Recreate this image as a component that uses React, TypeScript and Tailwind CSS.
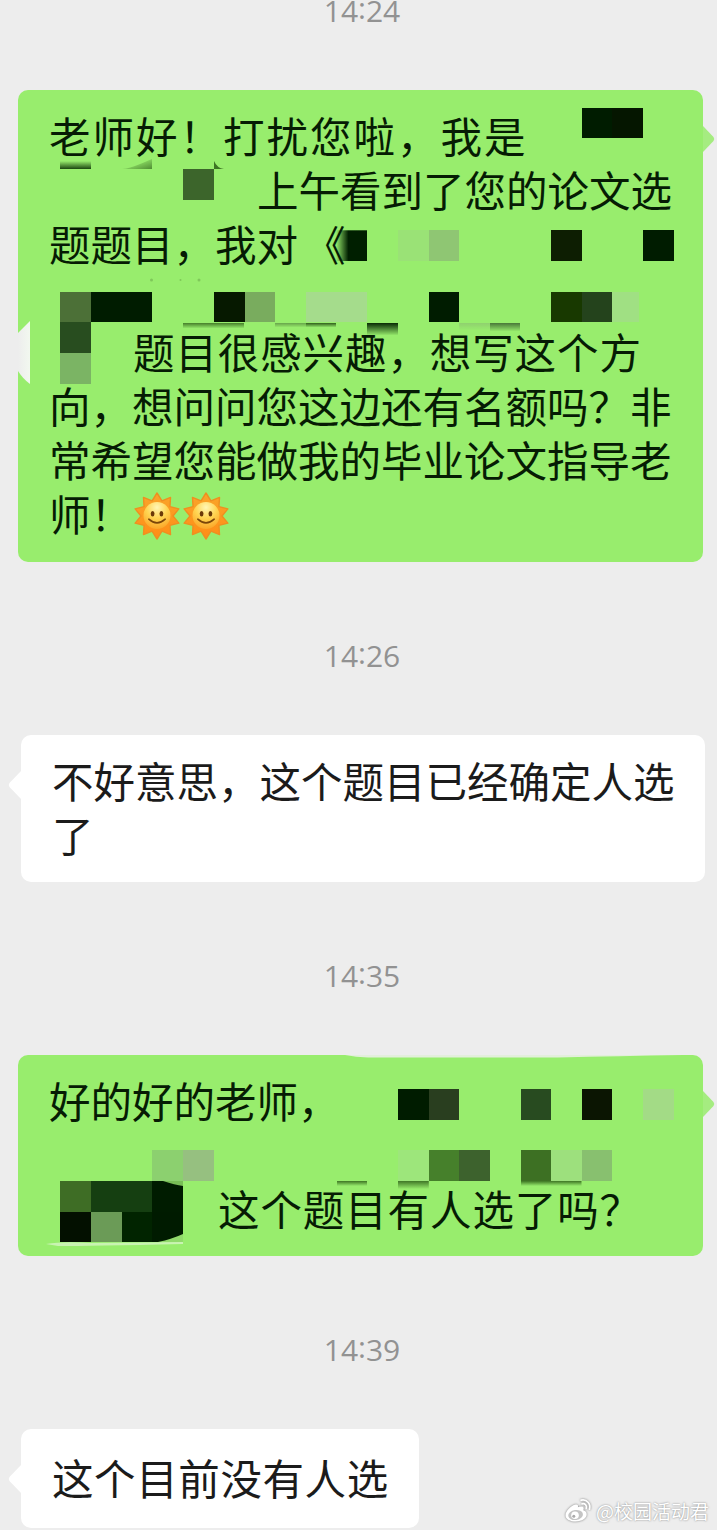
import React from 'react';

interface Tile {
  x: number;
  y: number;
  color: string;
  w?: number;
  h?: number;
  fade?: boolean;
}

interface LineProps {
  children?: React.ReactNode;
  className?: string;
}

interface BubbleProps {
  side: 'left' | 'right';
  className: string;
  children: React.ReactNode;
}

const CELL = 30.7;

// Tile positions are relative to the top left corner of the bubble
const FIRST_TILES: Tile[] = [
  { x: 563.7, y: 17.7, color: '#001c00' },
  { x: 594.4, y: 17.7, color: '#051600' },
  { x: 165, y: 79, color: '#3c652b' },
  { x: 379.8, y: 140.3, color: '#9ae276' },
  { x: 410.5, y: 140.3, color: '#8fc673' },
  { x: 533, y: 140.3, color: '#0d1e02' },
  { x: 625, y: 140.3, color: '#001c00' },
  { x: 42, y: 201.5, color: '#4c7037' },
  { x: 73, y: 201.5, w: 61.4, color: '#001c00' },
  { x: 196, y: 201.5, color: '#061900' },
  { x: 226.6, y: 201.5, color: '#79ac5e' },
  { x: 288, y: 201.5, w: 61, color: '#a5dc8c' },
  { x: 410.5, y: 201.5, color: '#001c00' },
  { x: 533, y: 201.5, color: '#183900' },
  { x: 563.7, y: 201.5, color: '#24431c' },
  { x: 594.4, y: 201.5, w: 27, color: '#a0e083' },
  { x: 42, y: 232.3, color: '#284d1f' },
  { x: 42, y: 262.8, color: '#7bb464' },
];

const FIRST_SMUDGES: Tile[] = [
  { x: 165, y: 232.5, w: 61, h: 6, color: '#3d7424', fade: true },
  { x: 257, y: 232.5, w: 31, h: 5, color: '#629b47', fade: true },
  { x: 288, y: 232.5, w: 30, h: 5, color: '#244d13', fade: true },
  { x: 349, y: 232.5, w: 31, h: 13, color: '#032200', fade: true },
  { x: 441, y: 232.5, w: 31, h: 8, color: '#8fce6f', fade: true },
  { x: 472, y: 232.5, w: 30, h: 9, color: '#447036', fade: true },
];

const REPLY_TILES: Tile[] = [
  { x: 379.8, y: 34, color: '#001c00' },
  { x: 410.5, y: 34, color: '#293e1f' },
  { x: 502.5, y: 34, color: '#284b20' },
  { x: 563.7, y: 34, color: '#0b1502' },
  { x: 625, y: 34, color: '#a3db86' },
  { x: 134.4, y: 95.3, color: '#8cd06f' },
  { x: 165, y: 95.3, color: '#96c080' },
  { x: 379.8, y: 95.3, color: '#9de67b' },
  { x: 410.5, y: 95.3, color: '#46802b' },
  { x: 441, y: 95.3, color: '#3d622d' },
  { x: 502.5, y: 95.3, color: '#3d7023' },
  { x: 533, y: 95.3, color: '#9de07d' },
  { x: 563.7, y: 95.3, color: '#88c06f' },
  { x: 42, y: 126, color: '#3e6d25' },
  { x: 73, y: 126, w: 61.4, color: '#153f11' },
  { x: 134.4, y: 126, color: '#001c00' },
  { x: 42, y: 156.7, color: '#031000' },
  { x: 73, y: 156.7, color: '#6b9b57' },
  { x: 103.7, y: 156.7, color: '#012400' },
  { x: 134.4, y: 156.7, color: '#001b00' },
];

const REPLY_SMUDGES: Tile[] = [
  { x: 319, y: 126, w: 30, h: 5, color: '#3d7424', fade: true },
  { x: 379.8, y: 126, w: 31, h: 8, color: '#3f7626', fade: true },
  { x: 502.5, y: 126, w: 61, h: 5, color: '#3d7424', fade: true },
];

const Mosaic: React.FC<{ tiles: Tile[]; children?: React.ReactNode }> = ({ tiles, children }) => (
  <svg className="pointer-events-none absolute inset-0 h-full w-full overflow-visible">
    <defs>
      <linearGradient id="down" x1="0" y1="0" x2="0" y2="1">
        <stop offset="0" stopColor="#fff" />
        <stop offset="1" stopColor="#000" />
      </linearGradient>
      <mask id="fade" maskContentUnits="objectBoundingBox">
        <rect width="1" height="1" fill="url(#down)" />
      </mask>
    </defs>
    {tiles.map((tile, i) => (
      <rect
        key={i}
        x={tile.x}
        y={tile.y}
        width={tile.w ?? CELL}
        height={tile.h ?? CELL}
        fill={tile.color}
        mask={tile.fade ? 'url(#fade)' : undefined}
        shapeRendering="crispEdges"
      />
    ))}
    {children}
  </svg>
);

const Sun: React.FC = () => {
  const points = Array.from({ length: 20 }, (_, i) => {
    const angle = (i * Math.PI) / 10 - Math.PI / 2;
    const radius = i % 2 === 0 ? 23 : 16;
    return `${24 + radius * Math.cos(angle)},${24 + radius * Math.sin(angle)}`;
  }).join(' ');

  return (
    <svg viewBox="0 0 48 48" className="h-12 w-12 shrink-0">
      <defs>
        <radialGradient id="sunFace" cx="0.5" cy="0.2" r="0.8">
          <stop offset="0" stopColor="#fff6b4" />
          <stop offset="0.5" stopColor="#ffd451" />
          <stop offset="1" stopColor="#fba528" />
        </radialGradient>
        <linearGradient id="sunRays" x1="0" y1="0" x2="0" y2="1">
          <stop offset="0" stopColor="#f9a52b" />
          <stop offset="1" stopColor="#ff8d16" />
        </linearGradient>
      </defs>
      <polygon points={points} fill="url(#sunRays)" stroke="#ee8f20" strokeWidth="1.4" strokeLinejoin="round" />
      <circle cx="24" cy="23.5" r="13.5" fill="url(#sunFace)" />
      <ellipse cx="19.6" cy="21.8" rx="1.9" ry="2.7" fill="#6b3a08" />
      <ellipse cx="28.4" cy="21.8" rx="1.9" ry="2.7" fill="#6b3a08" />
      <path d="M15.8 27.2Q24 34.5 32.2 27.2" fill="none" stroke="#7b4509" strokeWidth="1.6" strokeLinecap="round" />
    </svg>
  );
};

const WeiboLogo: React.FC = () => (
  <svg viewBox="0 0 28 26" className="h-[26px] w-7 drop-shadow-[0_0_1px_#777]">
    <path
      d="M11.5 6.5C7 7.5 1.5 13 1.5 17.2c0 4 4.8 6.3 10.2 6.3 6.5 0 11-3.4 11-7.2 0-2.3-1.8-3.4-3.4-4 .8-2.2.4-4.2-2.7-3.8-1 .1-2.2.6-2.7.7.6-2.1-.3-3.1-2.4-2.7z"
      fill="#fff"
    />
    <ellipse cx="11.6" cy="17" rx="7.4" ry="5" fill="#c4c4c4" transform="rotate(-8 11.6 17)" />
    <circle cx="11" cy="17.3" r="3.8" fill="#fff" />
    <circle cx="9.8" cy="18.3" r="1.5" fill="#aaa" />
    <path d="M18 5.8c3-.8 5.2 1.8 4.3 4.5M17.2 2.2c5.6-1.3 9.8 3.7 8.3 9" fill="none" stroke="#fff" strokeWidth="1.8" strokeLinecap="round" />
  </svg>
);

const Line: React.FC<LineProps> = ({ children, className = '' }) => (
  <div className={`flex h-[54px] items-center whitespace-pre ${className}`}>{children}</div>
);

const Bubble: React.FC<BubbleProps> = ({ side, className, children }) => (
  <div
    className={`relative rounded-[10px] pl-[31px] text-[41.5px] leading-[54px] ${
      side === 'right' ? 'ml-[18px] w-[685px] bg-[#98ed6d] text-[#061c04]' : 'ml-[21px] bg-white text-[#1b1b1b]'
    } ${className}`}
  >
    {side === 'right' ? (
      <svg viewBox="0 0 12 26" className="absolute top-[36px] left-[685px] h-[26px] w-3">
        <path d="M0 0L10.5 11q1.5 2 0 4L0 26z" fill="#a5ec80" />
      </svg>
    ) : (
      <svg viewBox="0 0 14 30" className="absolute top-[35px] -left-[13px] h-[30px] w-3.5">
        <path d="M14 0L1.5 13q-1.5 2 0 4L14 30z" fill="#fff" />
      </svg>
    )}
    {children}
  </div>
);

const Timestamp: React.FC<{ time: string; className: string }> = ({ time, className }) => {
  const [hours, minutes] = time.split(':');

  return (
    <div className={`flex h-8 items-center justify-center pl-[7px] font-['Open_Sans',sans-serif] text-[30px] leading-8 text-[#929292] ${className}`}>
      <span>{hours}</span>
      <span className="relative -top-[3px]">:</span>
      <span>{minutes}</span>
    </div>
  );
};

const App: React.FC = () => {
  return (
    <div className="relative h-[1530px] w-[717px] overflow-hidden bg-[#ededed] font-['Noto_Sans_CJK_SC',sans-serif]">
      <Timestamp time="14:24" className="-mt-[5px]" />

      <Bubble side="right" className="mt-[63px] h-[472px] pt-[18px]">
        <Line className="tracking-[2px]">老师好！打扰您啦，我是</Line>
        <Line className="pl-[208px]">上午看到了您的论文选</Line>
        <Line>
          题题目，我对<span className="ml-[6px]">《</span>
        </Line>
        <Line />
        <Line className="pl-[84px] tracking-[0.9px]">题目很感兴趣，想写这个方</Line>
        <Line>向，想问问您这边还有名额吗？非</Line>
        <Line>常希望您能做我的毕业论文指导老</Line>
        <Line>
          师！
          <span className="mt-[6px] ml-px flex gap-px">
            <Sun />
            <Sun />
          </span>
        </Line>
        <Mosaic tiles={[...FIRST_TILES, ...FIRST_SMUDGES]}>
          <defs>
            <linearGradient id="edge" x1="0" y1="0" x2="0" y2="1">
              <stop offset="0" stopColor="#98ed6d" />
              <stop offset="1" stopColor="#1b4610" />
            </linearGradient>
            <linearGradient id="smear" x1="0" y1="0" x2="1" y2="0">
              <stop offset="0" stopColor="#001f00" stopOpacity="0" />
              <stop offset="0.4" stopColor="#001f00" />
            </linearGradient>
            <linearGradient id="notch" x1="0" y1="0" x2="1" y2="0">
              <stop offset="0" stopColor="#ededed" />
              <stop offset="1" stopColor="#f2f8ef" />
            </linearGradient>
            <linearGradient id="corner" x1="0" y1="0" x2="1" y2="1">
              <stop offset="0.3" stopColor="#4f8b33" stopOpacity="0" />
              <stop offset="1" stopColor="#4f8b33" />
            </linearGradient>
          </defs>
          <rect x="318" y="140.3" width="31" height="30.7" fill="url(#smear)" />
          <rect x="42" y="71" width="31" height="8" fill="url(#edge)" />
          <path d="M104 79C115 78 126 72 134 69V79z" fill="url(#corner)" />
          <path d="M196 71Q199 78 206 79H196z" fill="#3d7424" />
          <path d="M0 243Q6 237 12 231V294Q5 289 0 281z" fill="url(#notch)" />
          <g fill="#7fc85a">
            <circle cx="133.5" cy="190" r="1.5" />
            <circle cx="162.5" cy="190" r="1" />
            <circle cx="181" cy="190" r="1.5" />
          </g>
        </Mosaic>
      </Bubble>

      <Timestamp time="14:26" className="mt-[78px]" />

      <Bubble side="left" className="mt-[63px] h-[147px] w-[684px] pt-[18px]">
        <Line>不好意思，这个题目已经确定人选</Line>
        <Line>了</Line>
      </Bubble>

      <Timestamp time="14:35" className="mt-[78px]" />

      <Bubble side="right" className="mt-[63px] h-[201px] pt-[18px]">
        <Line>好的好的老师，</Line>
        <Line />
        <Line className="pl-[169px] tracking-[0.9px]">这个题目有人选了吗？</Line>
        <Mosaic tiles={[...REPLY_TILES, ...REPLY_SMUDGES]}>
          <path d="M327 0H665Q600 1 540 2.5H350Q338 2 327 0z" fill="#e3efdb" />
          <path d="M28 189Q45 186 73 188L165 187V189Q70 191 40 191z" fill="#c9f3b2" />
          <path d="M145 126Q157 130 165 131V126z" fill="#78bd56" />
          <path d="M140 187Q154 184 165 179V187z" fill="#91da6b" />
        </Mosaic>
      </Bubble>

      <Timestamp time="14:39" className="mt-[78px]" />

      <Bubble side="left" className="mt-[63px] h-[99px] w-[398px] pt-[21px]">
        <Line className="tracking-[0.6px]">这个目前没有人选</Line>
      </Bubble>

      {/* Watermark */}
      <div className="absolute right-[8px] bottom-[6px] flex items-center gap-1 text-[19px] leading-[26px] text-white [text-shadow:0_0_2px_#777]">
        <WeiboLogo />
        <span>@校园活动君</span>
      </div>
    </div>
  );
};

export default App;
